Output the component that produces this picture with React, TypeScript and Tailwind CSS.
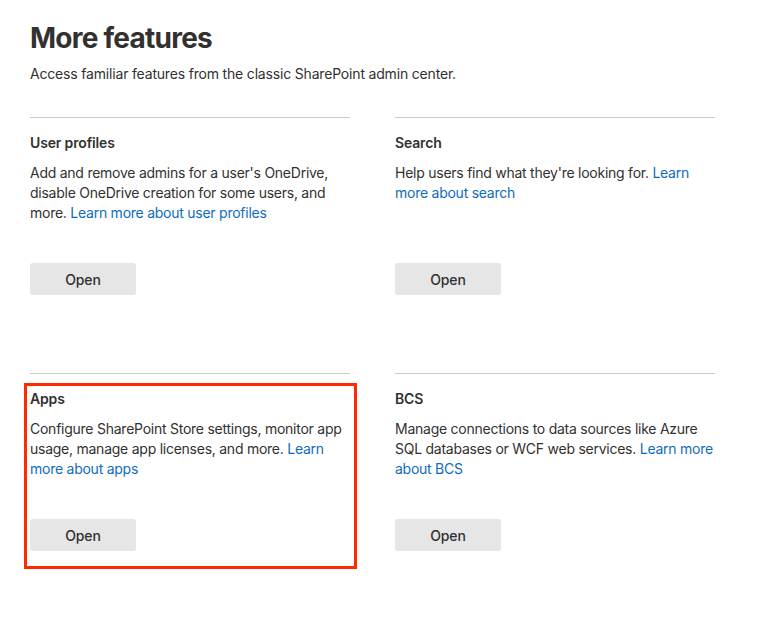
import React from 'react';

interface Feature {
  title: string;
  text: string;
  link: string;
  highlighted?: boolean;
}

const features: Feature[] = [
  {
    title: 'User profiles',
    text: "Add and remove admins for a user's OneDrive, disable OneDrive creation for some users, and more.",
    link: 'Learn more about user profiles',
  },
  {
    title: 'Search',
    text: "Help users find what they're looking for.",
    link: 'Learn more about search',
  },
  {
    title: 'Apps',
    text: 'Configure SharePoint Store settings, monitor app usage, manage app licenses, and more.',
    link: 'Learn more about apps',
    highlighted: true,
  },
  {
    title: 'BCS',
    text: 'Manage connections to data sources like Azure SQL databases or WCF web services.',
    link: 'Learn more about BCS',
  },
];

function FeatureCard({ feature }: { feature: Feature }) {
  return (
    <div className="relative flex flex-col border-t border-[#c8c8c8]">
      {/* Annotation box drawn over the card */}
      {feature.highlighted && (
        <div className="pointer-events-none absolute left-[-6px] right-[-7px] top-[9px] bottom-[-18px] border-[3px] border-[#ff2a00]" />
      )}
      <h2 className="mt-[15px] text-[14px] leading-5 font-semibold tracking-[-0.15px] text-[#323130]">{feature.title}</h2>
      <p className="mt-[10px] mb-10 text-[14px] leading-5 tracking-[-0.25px] text-[#323130]">
        {feature.text}{' '}
        <a href="#" className="text-[#0f6cbd]">
          {feature.link}
        </a>
      </p>
      <button className="mt-auto h-8 w-[106px] rounded-[3px] bg-[#e6e6e6] text-[14px] font-medium tracking-[-0.1px] text-[#323130]">
        Open
      </button>
    </div>
  );
}

export default function App() {
  return (
    <div className="min-h-[620px] bg-white pl-[30px] pt-[20px] font-['Inter','Noto_Sans',sans-serif] text-[#323130]">
      <h1 className="text-[28px] leading-9 font-bold tracking-[-0.75px]">More features</h1>
      <p className="mt-[8px] text-[14px] leading-5 tracking-[-0.18px]">Access familiar features from the classic SharePoint admin center.</p>
      <div className="mt-[33px] grid w-[685px] grid-cols-[320px_320px] gap-x-[45px] gap-y-[78px]">
        {features.map((f) => (
          <FeatureCard key={f.title} feature={f} />
        ))}
      </div>
    </div>
  );
}
